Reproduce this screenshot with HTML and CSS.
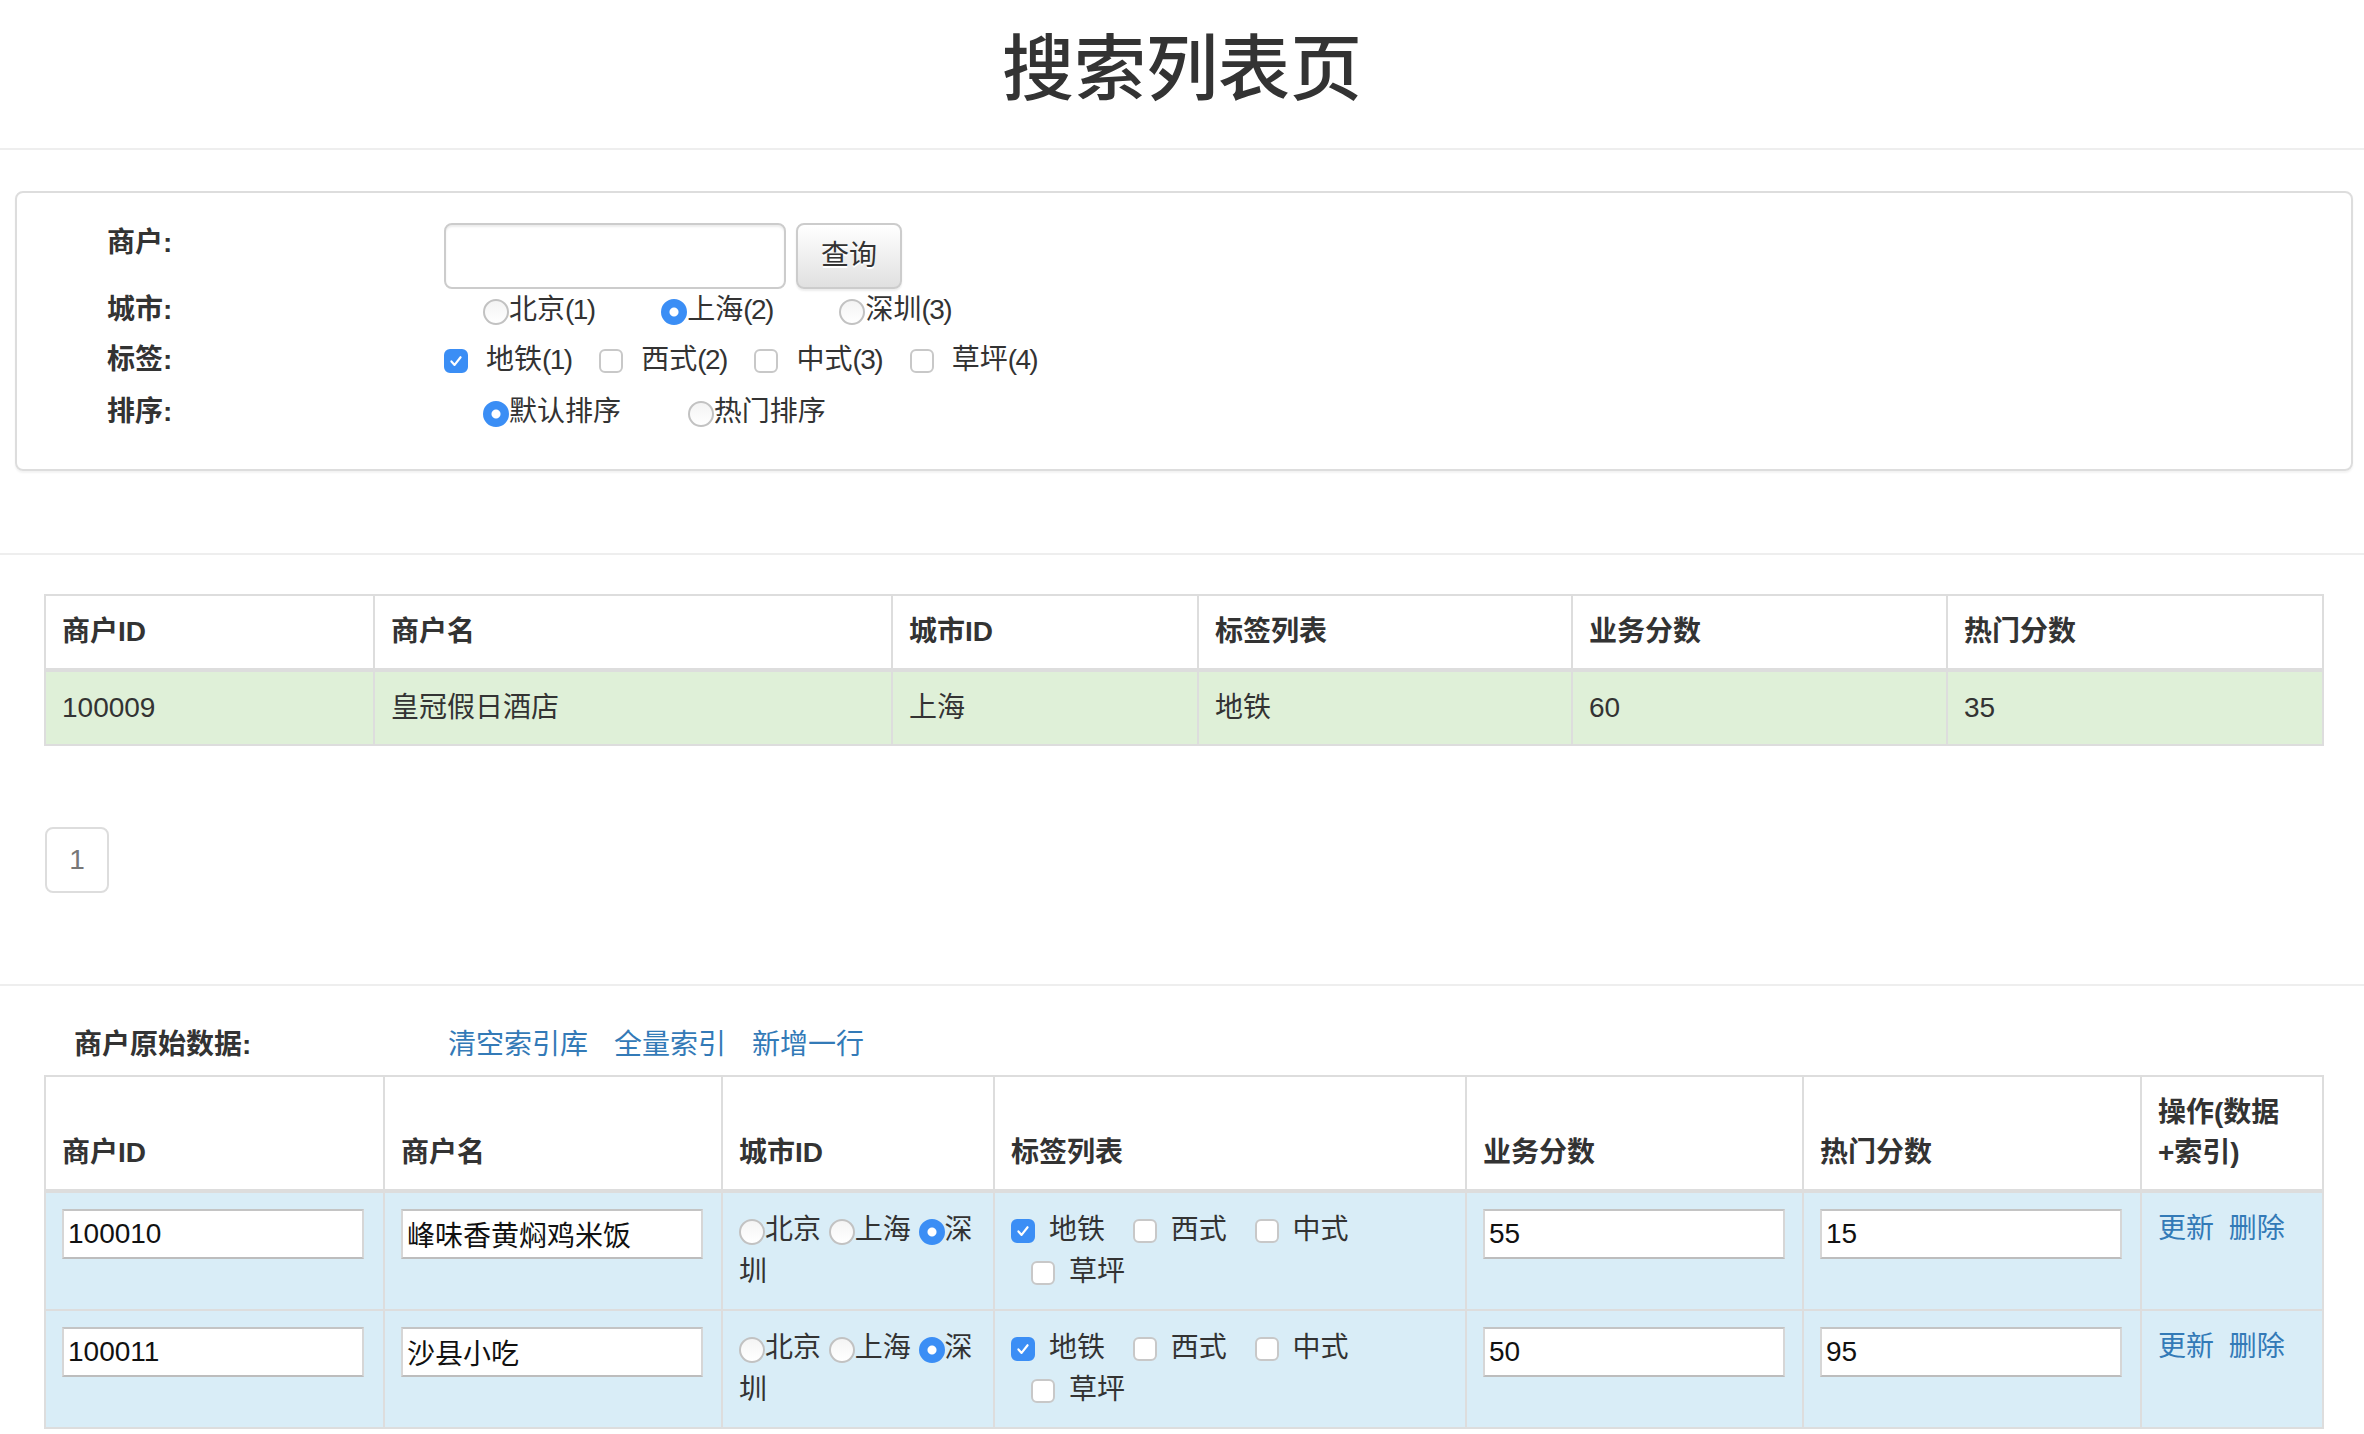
FILE: index.html
```html
<!DOCTYPE html>
<html lang="zh-CN">
<head>
<meta charset="utf-8">
<title>搜索列表页</title>
<link rel="stylesheet" href="styles.css">
</head>
<body>
<header class="page-header">
  <h1 class="page-title">搜索列表页</h1>
</header>
<hr class="divider divider-title">

<section class="search-panel">
  <div class="form-row row-shop">
    <span class="form-label">商户:</span>
    <div class="form-controls">
      <input class="text-input" type="text">
      <button class="btn" type="button">查询</button>
    </div>
  </div>
  <div class="form-row row-city">
    <span class="form-label">城市:</span>
    <div class="form-controls radio-group">
      <label class="opt"><span class="dot"></span>北京<span class="num">(1)</span></label>
      <label class="opt"><span class="dot on"></span>上海<span class="num">(2)</span></label>
      <label class="opt"><span class="dot"></span>深圳<span class="num">(3)</span></label>
    </div>
  </div>
  <div class="form-row row-tag">
    <span class="form-label">标签:</span>
    <div class="form-controls check-group">
      <label class="chk"><span class="box on"><svg viewBox="0 0 24 24"><path d="M6.5 12.5l3.8 4.2 7.2-9.2"/></svg></span>地铁<span class="num">(1)</span></label>
      <label class="chk"><span class="box"></span>西式<span class="num">(2)</span></label>
      <label class="chk"><span class="box"></span>中式<span class="num">(3)</span></label>
      <label class="chk"><span class="box"></span>草坪<span class="num">(4)</span></label>
    </div>
  </div>
  <div class="form-row row-sort">
    <span class="form-label">排序:</span>
    <div class="form-controls radio-group">
      <label class="opt"><span class="dot on"></span>默认排序</label>
      <label class="opt"><span class="dot"></span>热门排序</label>
    </div>
  </div>
</section>

<hr class="divider divider-panel">

<table class="data-table result-table">
  <colgroup>
    <col class="col-id"><col class="col-name"><col class="col-city"><col class="col-tags"><col class="col-biz"><col class="col-hot">
  </colgroup>
  <thead>
    <tr><th>商户ID</th><th>商户名</th><th>城市ID</th><th>标签列表</th><th>业务分数</th><th>热门分数</th></tr>
  </thead>
  <tbody>
    <tr class="row-success"><td>100009</td><td>皇冠假日酒店</td><td>上海</td><td>地铁</td><td>60</td><td>35</td></tr>
  </tbody>
</table>

<ul class="pagination"><li><a class="page-link">1</a></li></ul>

<hr class="divider divider-pager">

<div class="raw-head">
  <span class="raw-label">商户原始数据:</span>
  <nav class="raw-links">
    <a class="link">清空索引库</a>
    <a class="link">全量索引</a>
    <a class="link">新增一行</a>
  </nav>
</div>

<table class="data-table raw-table">
  <colgroup>
    <col class="col-id"><col class="col-name"><col class="col-city"><col class="col-tags"><col class="col-biz"><col class="col-hot"><col class="col-op">
  </colgroup>
  <thead>
    <tr><th>商户ID</th><th>商户名</th><th>城市ID</th><th>标签列表</th><th>业务分数</th><th>热门分数</th><th>操作(数据<br>+索引)</th></tr>
  </thead>
  <tbody>
    <tr class="row-info">
      <td><input class="cell-input" type="text" value="100010"></td>
      <td><input class="cell-input" type="text" value="峰味香黄焖鸡米饭"></td>
      <td class="city-cell"><span class="dot"></span><span>北京</span> <span class="dot"></span><span>上海</span> <span class="dot on"></span><span>深</span><span>圳</span></td>
      <td class="tag-cell"><label class="chk"><span class="box on"><svg viewBox="0 0 24 24"><path d="M6.5 12.5l3.8 4.2 7.2-9.2"/></svg></span>地铁</label> <label class="chk"><span class="box"></span>西式</label> <label class="chk"><span class="box"></span>中式</label> <label class="chk"><span class="box"></span>草坪</label></td>
      <td><input class="cell-input" type="text" value="55"></td>
      <td><input class="cell-input" type="text" value="15"></td>
      <td class="op-cell"><a class="link">更新</a> <a class="link">删除</a></td>
    </tr>
    <tr class="row-info">
      <td><input class="cell-input" type="text" value="100011"></td>
      <td><input class="cell-input" type="text" value="沙县小吃"></td>
      <td class="city-cell"><span class="dot"></span><span>北京</span> <span class="dot"></span><span>上海</span> <span class="dot on"></span><span>深</span><span>圳</span></td>
      <td class="tag-cell"><label class="chk"><span class="box on"><svg viewBox="0 0 24 24"><path d="M6.5 12.5l3.8 4.2 7.2-9.2"/></svg></span>地铁</label> <label class="chk"><span class="box"></span>西式</label> <label class="chk"><span class="box"></span>中式</label> <label class="chk"><span class="box"></span>草坪</label></td>
      <td><input class="cell-input" type="text" value="50"></td>
      <td><input class="cell-input" type="text" value="95"></td>
      <td class="op-cell"><a class="link">更新</a> <a class="link">删除</a></td>
    </tr>
  </tbody>
</table>
</body>
</html>
```

FILE: styles.css
```css
html, body {
  margin: 0;
  padding: 0;
  background: #fff;
}

body {
  font-family: "Liberation Sans", "Noto Sans CJK SC", sans-serif;
  font-size: 28px;
  line-height: 40px;
  color: #333;
}

/* ---------- header ---------- */
.page-header {
  padding-top: 30px;
}

.page-title {
  margin: 0;
  font-size: 72px;
  line-height: 79px;
  font-weight: 500;
  text-align: center;
  color: #333;
}

.divider {
  margin: 0;
  height: 0;
  border: 0;
  border-top: 2px solid #eee;
}

.divider-title { margin-top: 39px; }
.divider-panel { margin-top: 82px; }
.divider-pager { margin-top: 91px; }

/* ---------- search panel ---------- */
.search-panel {
  margin: 41px 11px 0 15px;
  border: 2px solid #ddd;
  border-radius: 8px;
  box-shadow: 0 2px 2px rgba(0, 0, 0, 0.05);
  padding: 30px 0 37px 90px;
}

.form-row {
  display: grid;
  grid-template-columns: 337px 1fr;
  align-items: start;
}

.row-shop { height: 67px; }
.row-city { height: 50px; }
.row-tag  { height: 52px; }
.row-sort { height: 40px; }

.form-label {
  font-weight: 700;
  line-height: 40px;
}

.form-controls {
  display: flex;
  align-items: flex-start;
  gap: 10px;
}

.text-input {
  box-sizing: border-box;
  width: 342px;
  height: 66px;
  margin: 0;
  border: 2px solid #ccc;
  border-radius: 8px;
  box-shadow: inset 0 2px 2px rgba(0, 0, 0, 0.075);
  font: inherit;
  padding: 0 20px;
}

.btn {
  box-sizing: border-box;
  width: 106px;
  height: 66px;
  margin: 0;
  border: 2px solid #ccc;
  border-radius: 8px;
  background: linear-gradient(#fff, #e0e0e0);
  box-shadow: 0 2px 2px rgba(0, 0, 0, 0.075);
  text-shadow: 0 2px 0 #fff;
  font-family: inherit;
  font-size: 28px;
  line-height: 40px;
  color: #333;
  padding: 0;
}

.radio-group {
  display: block;
  padding-left: 39px;
}

.radio-group .opt + .opt {
  margin-left: 59px;
}

.check-group {
  display: block;
}

.num {
  letter-spacing: -1.6px;
}

/* ---------- radios & checkboxes ---------- */
.opt {
  color: #333;
  white-space: nowrap;
}

.dot {
  display: inline-block;
  box-sizing: border-box;
  width: 26px;
  height: 26px;
  border-radius: 50%;
  border: 2px solid #c2c2c2;
  background: linear-gradient(#f4f4f4, #fff);
  vertical-align: -6px;
}

.dot.on {
  border-color: #3b8ef5;
  background: radial-gradient(circle, #fff 0 4px, #3b8ef5 5px);
}

.chk {
  white-space: nowrap;
  margin-left: 20px;
}

.chk:first-child {
  margin-left: 0;
}

.box {
  display: inline-block;
  box-sizing: border-box;
  width: 24px;
  height: 24px;
  border: 2px solid #c8c8c8;
  border-radius: 6px;
  background: #fff;
  vertical-align: -4px;
  margin-right: 18px;
}

.box svg {
  display: block;
  width: 100%;
  height: 100%;
}

.box svg path {
  fill: none;
  stroke: #fff;
  stroke-width: 2.6;
  stroke-linecap: round;
  stroke-linejoin: round;
}

.box.on {
  background: #3b8ef5;
  border-color: #3b8ef5;
}

/* ---------- tables ---------- */
.data-table {
  table-layout: fixed;
  border-collapse: collapse;
  border-spacing: 0;
  width: 2278px;
  margin-left: 44px;
}

.data-table th,
.data-table td {
  border: 2px solid #ddd;
  padding: 16px;
  text-align: left;
  vertical-align: top;
  line-height: 40px;
}

.data-table th {
  font-weight: 700;
  vertical-align: bottom;
  border-bottom-width: 4px;
}

.result-table { margin-top: 39px; }

.result-table .col-id   { width: 329px; }
.result-table .col-name { width: 518px; }
.result-table .col-city { width: 306px; }
.result-table .col-tags { width: 374px; }
.result-table .col-biz  { width: 375px; }
.result-table .col-hot  { width: 376px; }

.row-success td { background: #dff0d8; }
.row-info td    { background: #d9edf7; }

/* ---------- pagination ---------- */
.pagination {
  list-style: none;
  margin: 81px 0 0 45px;
  padding: 0;
  display: flex;
}

.page-link {
  display: block;
  box-sizing: border-box;
  width: 64px;
  height: 66px;
  border: 2px solid #ddd;
  border-radius: 8px;
  text-align: center;
  line-height: 62px;
  color: #777;
}

/* ---------- raw data ---------- */
.raw-head {
  margin-top: 39px;
  display: flex;
  align-items: center;
  height: 40px;
}

.raw-label {
  box-sizing: border-box;
  width: 448px;
  padding-left: 74px;
  font-weight: 700;
}

.raw-links {
  display: flex;
  gap: 26px;
}

.link {
  color: #337ab7;
  text-decoration: none;
  cursor: pointer;
}

.raw-table { margin-top: 10px; }

.raw-table .col-id   { width: 339px; }
.raw-table .col-name { width: 338px; }
.raw-table .col-city { width: 272px; }
.raw-table .col-tags { width: 472px; }
.raw-table .col-biz  { width: 337px; }
.raw-table .col-hot  { width: 338px; }
.raw-table .col-op   { width: 182px; }

.raw-table .city-cell,
.raw-table .tag-cell {
  line-height: 42px;
}

.cell-input {
  box-sizing: border-box;
  display: block;
  width: 302px;
  height: 50px;
  margin: 0;
  padding: 0 4px;
  border: 2px solid #d6d6d6;
  border-top-color: #c4c4c4;
  border-bottom-color: #bdbdbd;
  background: #fff;
  font-family: inherit;
  font-size: 28px;
  color: #111;
}

.tag-cell .box {
  margin-right: 14px;
}

.op-cell .link + .link {
  margin-left: 7px;
}
```
